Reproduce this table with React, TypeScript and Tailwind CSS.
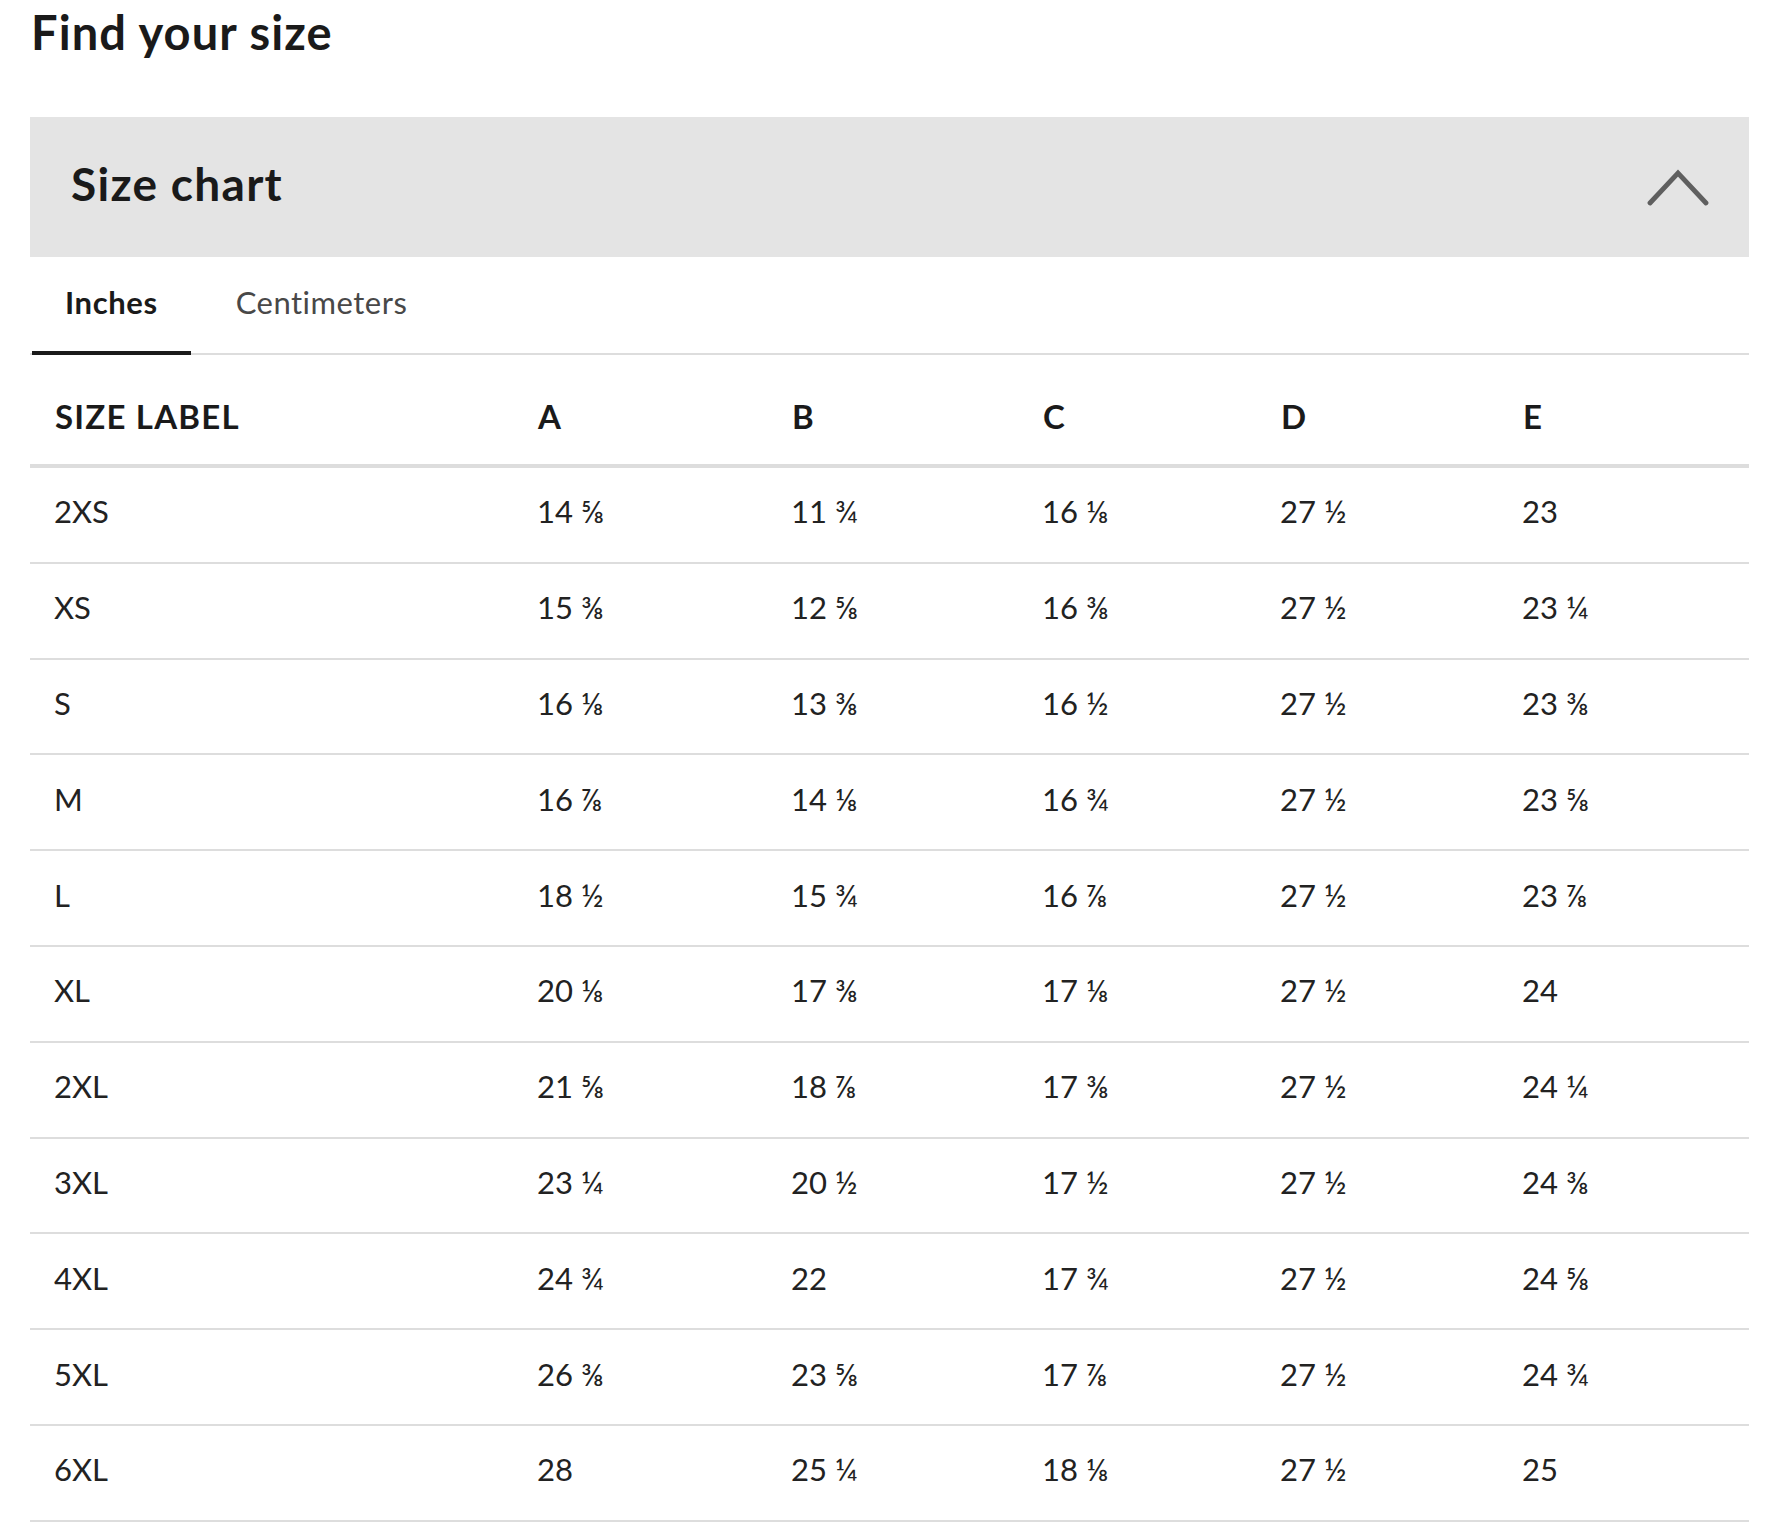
import React from "react";

const rows: [string, string, string, string, string, string][] = [
  ["2XS", "14 ⅝", "11 ¾", "16 ⅛", "27 ½", "23"],
  ["XS", "15 ⅜", "12 ⅝", "16 ⅜", "27 ½", "23 ¼"],
  ["S", "16 ⅛", "13 ⅜", "16 ½", "27 ½", "23 ⅜"],
  ["M", "16 ⅞", "14 ⅛", "16 ¾", "27 ½", "23 ⅝"],
  ["L", "18 ½", "15 ¾", "16 ⅞", "27 ½", "23 ⅞"],
  ["XL", "20 ⅛", "17 ⅜", "17 ⅛", "27 ½", "24"],
  ["2XL", "21 ⅝", "18 ⅞", "17 ⅜", "27 ½", "24 ¼"],
  ["3XL", "23 ¼", "20 ½", "17 ½", "27 ½", "24 ⅜"],
  ["4XL", "24 ¾", "22", "17 ¾", "27 ½", "24 ⅝"],
  ["5XL", "26 ⅜", "23 ⅝", "17 ⅞", "27 ½", "24 ¾"],
  ["6XL", "28", "25 ¼", "18 ⅛", "27 ½", "25"],
];

const headers = ["SIZE LABEL", "A", "B", "C", "D", "E"];

export default function App() {
  return (
    <div className="min-h-[1536px] w-full bg-white font-['Lato','DejaVu_Sans',sans-serif] text-[#1c1c1c]">
      <div className="w-[1719px] ml-[30px]">
        <h1 className="mt-[9px] ml-[1px] text-[47px] leading-none font-bold tracking-[1.1px] text-[#1a1a1a]">Find your size</h1>

        <div className="mt-[61px] h-[140px] bg-[#e4e4e4] flex items-start justify-between">
          <h2 className="pt-[44px] pl-[41px] text-[46px] leading-none font-bold tracking-[1.3px] text-[#1a1a1a]">Size chart</h2>
          <svg className="mr-[40px] mt-[51px]" width="62" height="38" viewBox="0 0 62 38" fill="none">
            <polyline points="3,35 31,5 59,35" stroke="#5f5f5f" strokeWidth="4.8" strokeLinecap="round" strokeLinejoin="miter" />
          </svg>
        </div>

        <div className="h-[98px] border-b-2 border-[#dddddd] flex items-stretch">
          <div className="relative ml-[2px] px-[33px] pt-[30px] text-[31px] leading-none font-bold tracking-[0.6px] text-[#1a1a1a]">
            Inches
            <span className="absolute left-0 right-0 bottom-[-2px] h-[4px] bg-[#1a1a1a]" />
          </div>
          <div className="ml-[12px] px-[33px] pt-[30px] text-[31px] leading-none tracking-[0.5px] text-[#484848]">Centimeters</div>
        </div>

        <div className="grid grid-cols-[483px_254px_251px_238px_242px_251px] h-[113px] border-b-4 border-[#dddddd]">
          {headers.map((h) => (
            <div key={h} className="pl-[25px] pt-[45px] text-[33px] leading-none font-bold tracking-[1.2px] text-[#1a1a1a]">
              {h}
            </div>
          ))}
        </div>

        {rows.map((r) => (
          <div
            key={r[0]}
            className="grid grid-cols-[483px_254px_251px_238px_242px_251px] h-[95.8px] border-b-2 border-[#dddddd] items-center"
          >
            {r.map((c, i) => (
              <div key={i} className="pl-[24px] pb-[6px] text-[31px] leading-none text-[#222222]">
                {c}
              </div>
            ))}
          </div>
        ))}
      </div>
    </div>
  );
}
